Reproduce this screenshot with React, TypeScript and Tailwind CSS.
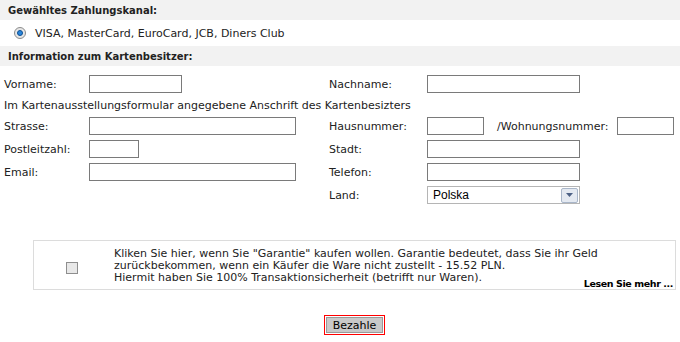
const font = "font-['DejaVu_Sans',Verdana,sans-serif]";

function Field({ w }: { w: string }) {
  return <input type="text" className={`${w} shrink-0 h-[18px] border border-[#7a7a7a] bg-white outline-none`} />;
}

function Label({ children, w }: { children: React.ReactNode; w: string }) {
  return <span className={`${w} shrink-0 whitespace-nowrap`}>{children}</span>;
}

export default function App() {
  return (
    <div className={`w-[680px] h-[342px] bg-white text-[11px] leading-[13px] text-[#222] ${font}`}>
      {/* Payment channel */}
      <div className="h-5 bg-[#f2f2f2] pl-2 flex items-center font-bold text-[10px]">Gewähltes Zahlungskanal:</div>
      <div className="h-[26px] flex items-center pl-[14px] gap-[9px]">
        <span className="w-[12px] h-[12px] rounded-full border border-[#8c8c8c] bg-[#e6e6e6] flex items-center justify-center">
          <span className="w-[6px] h-[6px] rounded-full bg-[#2a86dc] border border-[#0c4f92]" />
        </span>
        <span>VISA, MasterCard, EuroCard, JCB, Diners Club</span>
      </div>
      <div className="h-5 bg-[#f2f2f2] pl-2 flex items-center font-bold text-[10px]">Information zum Kartenbesitzer:</div>

      {/* Card holder form */}
      <div className="pl-1 pt-[9px] flex flex-col">
        <div className="flex items-center h-[18px]">
          <div className="w-[325px] flex items-center">
            <Label w="w-[85px]">Vorname:</Label>
            <Field w="w-[93px]" />
          </div>
          <Label w="w-[98px]">Nachname:</Label>
          <Field w="w-[153px]" />
        </div>
        <div className="mt-[6px] h-[13px]">Im Kartenausstellungsformular angegebene Anschrift des Kartenbesizters</div>
        <div className="flex items-center h-[18px] mt-[5px]">
          <div className="w-[325px] flex items-center">
            <Label w="w-[85px]">Strasse:</Label>
            <Field w="w-[207px]" />
          </div>
          <Label w="w-[98px]">Hausnummer:</Label>
          <Field w="w-[57px]" />
          <Label w="w-[133px] pl-[13px]">/Wohnungsnummer:</Label>
          <Field w="w-[57px]" />
        </div>
        <div className="flex items-center h-[18px] mt-[5px]">
          <div className="w-[325px] flex items-center">
            <Label w="w-[85px]">Postleitzahl:</Label>
            <Field w="w-[50px]" />
          </div>
          <Label w="w-[98px]">Stadt:</Label>
          <Field w="w-[153px]" />
        </div>
        <div className="flex items-center h-[18px] mt-[5px]">
          <div className="w-[325px] flex items-center">
            <Label w="w-[85px]">Email:</Label>
            <Field w="w-[207px]" />
          </div>
          <Label w="w-[98px]">Telefon:</Label>
          <Field w="w-[153px]" />
        </div>
        <div className="flex items-center h-[18px] mt-[5px]">
          <div className="w-[325px]" />
          <Label w="w-[98px]">Land:</Label>
          <div className="w-[153px] h-[18px] border border-[#b5b5b5] bg-white flex items-center justify-between pl-[5px] pr-[1px] font-['Liberation_Sans',Arial,sans-serif] text-[12px] text-black">
            <span>Polska</span>
            <span className="w-[17px] h-[15px] rounded-[2px] border border-[#a9b6c9] bg-[#e4e9f1] flex items-center justify-center">
              <svg width="7" height="4" viewBox="0 0 7 4"><path d="M0 0h7L3.5 4z" fill="#4d6185" /></svg>
            </span>
          </div>
        </div>
      </div>

      {/* Guarantee */}
      <div className="ml-[33px] mt-[36px] w-[643px] h-[50px] border border-[#dcdcdc] flex">
        <div className="w-[80px] flex items-center">
          <span className="ml-[32px] mt-[6px] w-[12px] h-[12px] border border-[#8e8e8e] bg-[#e8e8e8]" />
        </div>
        <div className="flex-1 pt-[7px] pr-[2px] leading-[12px] flex flex-col">
          <span>Kliken Sie hier, wenn Sie "Garantie" kaufen wollen. Garantie bedeutet, dass Sie ihr Geld</span>
          <span>zurückbekommen, wenn ein Käufer die Ware nicht zustellt - 15.52 PLN.</span>
          <div className="flex justify-between items-end">
            <span>Hiermit haben Sie 100% Transaktionsicherheit (betrifft nur Waren).</span>
            <span className="font-bold text-black text-[9.5px] tracking-[-0.4px] -mb-[6px]">Lesen Sie mehr ...</span>
          </div>
        </div>
      </div>

      {/* Submit */}
      <div className="flex mt-[25px] pl-[324px]">
        <div className="border border-[#ff0000] p-px">
          <button className="w-[57px] h-[16px] bg-[#c9c9c9] border border-[#9a9a9a] text-[11px] leading-[13px] text-black">Bezahle</button>
        </div>
      </div>
    </div>
  );
}
